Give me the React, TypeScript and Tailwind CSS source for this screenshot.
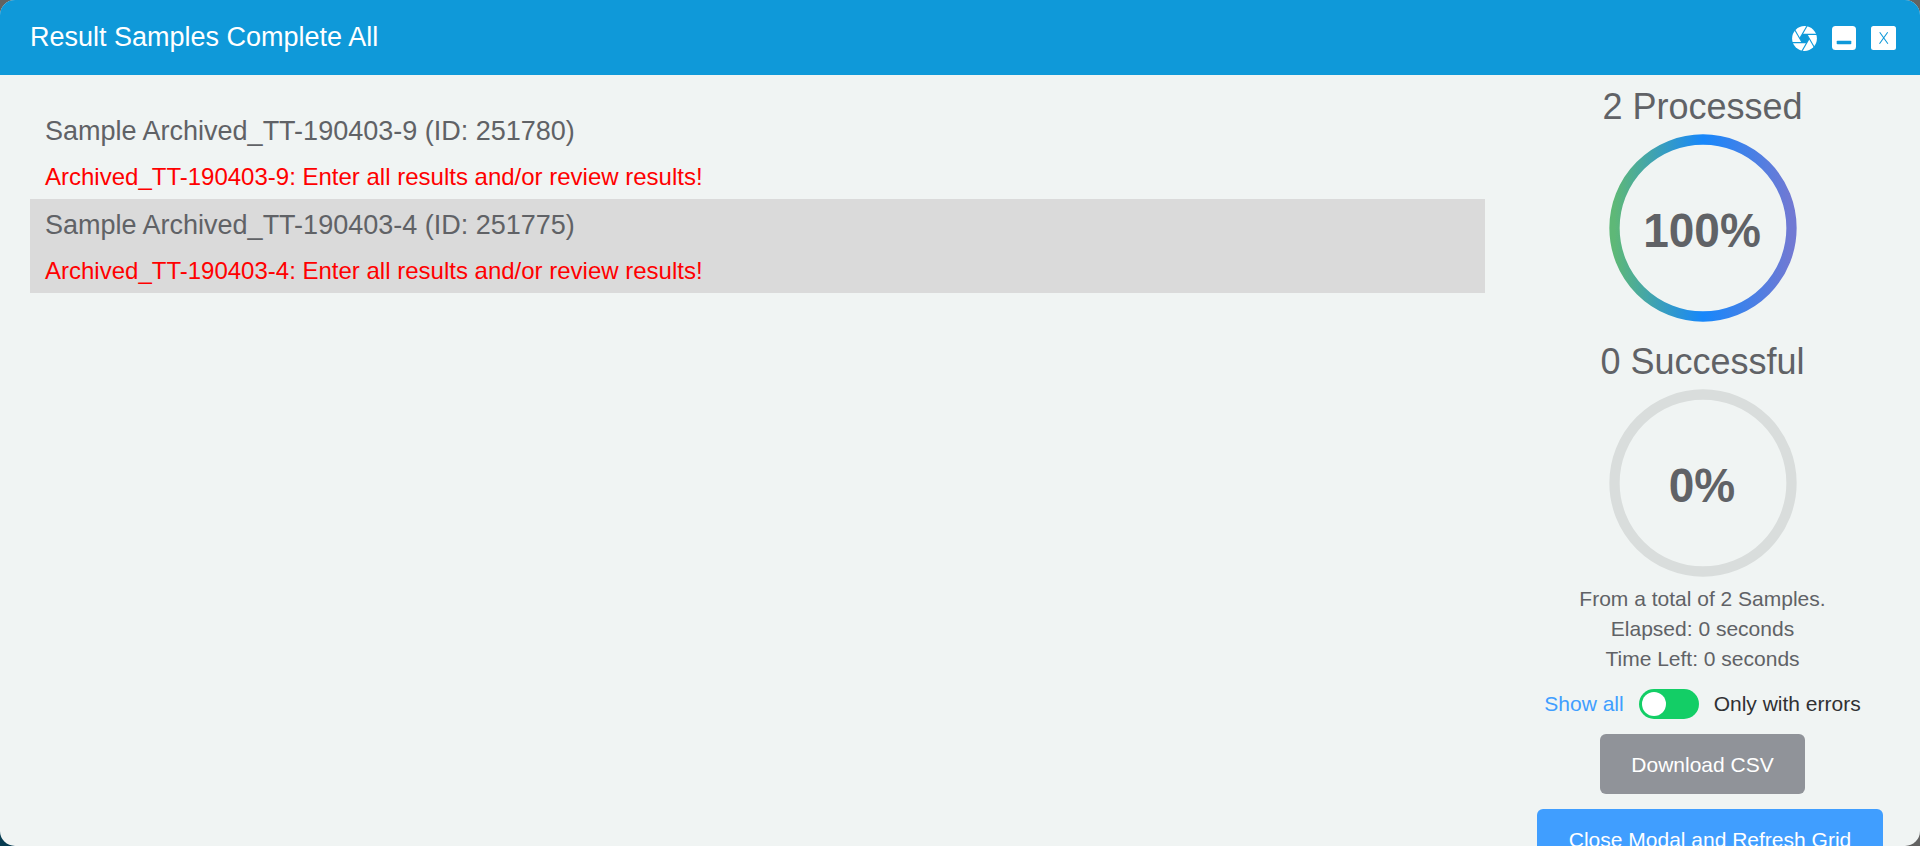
const samples = [
  { name: "Archived_TT-190403-9", id: 251780 },
  { name: "Archived_TT-190403-4", id: 251775 },
];

const bladeAngles = [0, 60, 120, 180, 240, 300];

function ApertureIcon() {
  return (
    <svg viewBox="-12.5 -12.5 25 25" className="h-[25px] w-[25px]">
      <circle r="12.4" fill="white" />
      <path d="M-2.4 -4.1H2.4L4.7 0 2.4 4.1H-2.4L-4.7 0Z" fill="#0f99d9" />
      {bladeAngles.map((angle) => (
        <path key={angle} d="M-2.2 -4.1H12.5" stroke="#0f99d9" strokeWidth="1.1" transform={`rotate(${angle})`} />
      ))}
    </svg>
  );
}

function Ring({ percent, gradient }: { percent: number; gradient?: boolean }) {
  return (
    <div className="grid h-[188px] w-[188px] shrink-0 place-items-center">
      <svg viewBox="0 0 188 188" className="col-start-1 row-start-1 h-full w-full">
        <defs>
          <linearGradient id="ring" x1="0" x2="1" y1="0" y2="0">
            <stop offset="0" stopColor="#5eb877" />
            <stop offset="0.5" stopColor="#1787fb" />
            <stop offset="1" stopColor="#7179d3" />
          </linearGradient>
        </defs>
        <circle cx="94" cy="94" r="88.5" fill="none" strokeWidth="10.3" stroke={gradient ? "url(#ring)" : "#d9dddc"} />
      </svg>
      <span className="col-start-1 row-start-1 scale-y-105 pt-[3px] pr-[1px] text-[46px] leading-none font-bold">{percent}%</span>
    </div>
  );
}

export default function App() {
  return (
    <div className="h-[846px] w-full overflow-hidden bg-[#626262] font-['Liberation_Sans',Arial,sans-serif] text-[#606266]">
      <div className="h-full bg-[linear-gradient(#626262_50%,#063b50_50%)] bg-[length:50%_100%] bg-no-repeat">
        <div className="flex h-full flex-col overflow-hidden rounded-[15px] bg-[#f0f4f3]">
          <header className="flex h-[75px] shrink-0 items-center justify-between bg-[#0f99d9] pr-6 pl-[30px] text-white">
            <h1 className="pb-[2px] text-[27px] leading-[36px]">Result Samples Complete All</h1>
            <div className="flex items-center gap-[15px] pt-[1px]">
              <ApertureIcon />
              <svg viewBox="0 0 24 24" className="h-6 w-6">
                <rect width="24" height="24" rx="3.5" fill="white" />
                <rect x="4.7" y="14.7" width="14.6" height="3.6" rx="0.8" fill="#0f99d9" />
              </svg>
              <svg viewBox="0 0 25 24" className="h-6 w-[25px]">
                <rect width="25" height="24" rx="2.5" fill="white" />
                <path d="M8.7 6.2 16.9 17.8M16.7 6.2 8.5 17.8" stroke="#0f99d9" strokeWidth="1.1" fill="none" />
              </svg>
            </div>
          </header>
          <main className="flex min-h-0 flex-1 justify-between pr-[37.5px] pl-[30px]">
            <ul className="w-[1455px] pt-[30px]">
              {samples.map((s) => (
                <li key={s.id} className="h-[94px] px-[15px] even:bg-[#dadada]">
                  <p className="h-[51px] text-[27px] leading-[53px]">Sample {s.name} (ID: {s.id})</p>
                  <p className="h-[43px] text-[24px] leading-[42px] text-[#ff0000]">{s.name}: Enter all results and/or review results!</p>
                </li>
              ))}
            </ul>
            <aside className="flex w-[360px] shrink-0 flex-col items-center pt-[9px]">
              <h2 className="h-[50px] shrink-0 text-[36px] leading-[46px]">2 Processed</h2>
              <Ring percent={100} gradient />
              <h2 className="mt-[17px] h-[50px] shrink-0 text-[36px] leading-[46px]">0 Successful</h2>
              <Ring percent={0} />
              <div className="mt-[7px] shrink-0 text-center text-[21px] leading-[30px]">
                <p>From a total of 2 Samples.</p>
                <p>Elapsed: 0 seconds</p>
                <p>Time Left: 0 seconds</p>
              </div>
              <div className="mt-[15px] flex h-[30px] shrink-0 items-center gap-[15px] text-[21px] leading-[30px]">
                <span className="text-[#409eff]">Show all</span>
                <button className="h-[30px] w-[60px] rounded-full bg-[#13ce66] p-[3px]">
                  <span className="block h-6 w-6 rounded-full bg-white" />
                </button>
                <span className="text-[#303133]">Only with errors</span>
              </div>
              <button className="mt-[15px] h-[60px] w-[205px] shrink-0 rounded-[6px] bg-[#909399] pt-[2px] text-[21px] text-white">Download CSV</button>
              <button className="mt-[15px] ml-[15px] h-[60px] w-[346px] shrink-0 rounded-[6px] bg-[#409eff] pt-[2px] text-[21px] text-white">Close Modal and Refresh Grid</button>
            </aside>
          </main>
        </div>
      </div>
    </div>
  );
}
